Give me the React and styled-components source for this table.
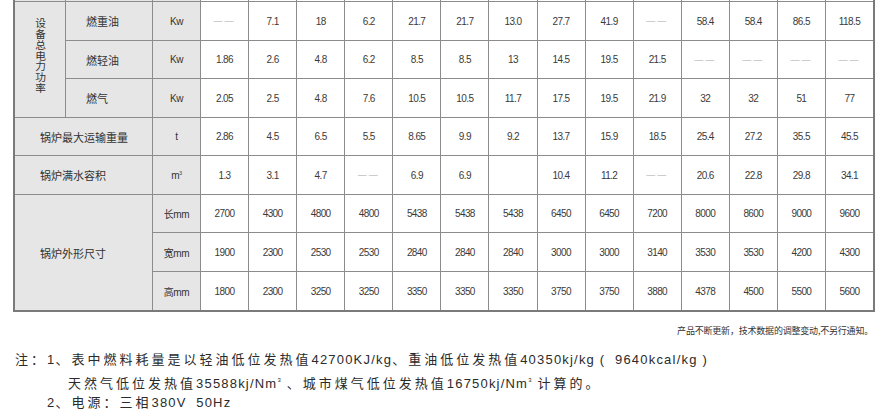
import React from "react";
import styled, { createGlobalStyle } from "styled-components";

const GlobalStyle = createGlobalStyle`
  html, body {
    margin: 0;
    padding: 0;
    background: #ffffff;
  }
  body {
    font-family: "Liberation Sans", "Noto Sans CJK SC", sans-serif;
    color: #333;
  }
`;

const LINE = "#8c8c8c";
const GREY = "#e6e6e6";

const Page = styled.div`
  width: 891px;
  height: 419px;
  overflow: hidden;
  display: flex;
  flex-direction: column;
`;

const Sheet = styled.div`
  margin: -37px 0 0 13px;
  width: 858px;
  display: grid;
  grid-template-columns: 50px 86px 47px repeat(14, 1fr);
  grid-template-rows: 36px 38px 37px 38px 37px 38px 37px 38px 38px;
  gap: 1px;
  background: ${LINE};
  border: 2px solid #7a7a7a;
`;

const Cell = styled.div`
  grid-column: span ${({ $cols }) => $cols || 1};
  grid-row: span ${({ $rows }) => $rows || 1};
  background: ${({ $head }) => ($head ? GREY : "#fff")};
  display: flex;
  align-items: center;
  justify-content: ${({ $left }) => ($left ? "flex-start" : "center")};
  padding-left: ${({ $left }) => $left || 0}px;
  font-family: "Liberation Sans", "Noto Sans CJK SC", sans-serif;
  font-size: 11px;
  color: #333;
  white-space: nowrap;
`;

const Num = styled.span`
  font-family: "Liberation Sans Narrow", "Liberation Sans", sans-serif;
  font-size: 10px;
  letter-spacing: -0.6px;
  color: #3a3a3a;
`;

const Dash = styled.span`
  font-size: 9px;
  letter-spacing: 2px;
  color: #aaa;
`;

const Vertical = styled.span`
  writing-mode: vertical-rl;
  text-orientation: upright;
  font-family: "Noto Sans CJK SC", sans-serif;
  font-size: 10.7px;
  line-height: 12px;
  margin-top: -8px;
`;

const Unit = styled.span`
  font-size: 10px;
  letter-spacing: -0.4px;
  sup {
    font-size: 5px;
    vertical-align: 4px;
  }
`;

const Disclaimer = styled.div`
  width: 873px;
  margin-top: 12px;
  text-align: right;
  font-family: "Noto Sans CJK SC", sans-serif;
  font-size: 9px;
  letter-spacing: -0.2px;
  color: #333;
`;

const Notes = styled.div`
  margin: 12px 0 0 15px;
  font-family: "Liberation Sans", "Noto Sans CJK SC", sans-serif;
  font-size: 13px;
  color: #2b2b2b;
  letter-spacing: 3px;
  display: flex;
  flex-direction: column;
  line-height: 21px;
`;

const NoteLine = styled.div`
  padding-left: ${({ $indent }) => $indent || 0}px;
  margin-top: ${({ $pull }) => ($pull ? -2 : 0)}px;
  white-space: pre;
`;

const Latin = styled.span`
  letter-spacing: 1.2px;
  sup {
    font-size: 6px;
    vertical-align: 6px;
  }
`;

const power = [
  ["燃重油", ["--", "7.1", "18", "6.2", "21.7", "21.7", "13.0", "27.7", "41.9", "--", "58.4", "58.4", "86.5", "118.5"]],
  ["燃轻油", ["1.86", "2.6", "4.8", "6.2", "8.5", "8.5", "13", "14.5", "19.5", "21.5", "--", "--", "--", "--"]],
  ["燃气", ["2.05", "2.5", "4.8", "7.6", "10.5", "10.5", "11.7", "17.5", "19.5", "21.9", "32", "32", "51", "77"]],
];

const weight = ["2.86", "4.5", "6.5", "5.5", "8.65", "9.9", "9.2", "13.7", "15.9", "18.5", "25.4", "27.2", "35.5", "45.5"];
const water = ["1.3", "3.1", "4.7", "--", "6.9", "6.9", "", "10.4", "11.2", "--", "20.6", "22.8", "29.8", "34.1"];

const sizes = [
  ["长mm", ["2700", "4300", "4800", "4800", "5438", "5438", "5438", "6450", "6450", "7200", "8000", "8600", "9000", "9600"]],
  ["宽mm", ["1900", "2300", "2530", "2530", "2840", "2840", "2840", "3000", "3000", "3140", "3530", "3530", "4200", "4300"]],
  ["高mm", ["1800", "2300", "3250", "3250", "3350", "3350", "3350", "3750", "3750", "3880", "4378", "4500", "5500", "5600"]],
];

function Values({ list, row }) {
  return list.map((v, i) => (
    <Cell key={`${row}-${i}`}>
      {v === "--" ? <Dash>——</Dash> : <Num>{v}</Num>}
    </Cell>
  ));
}

export default function App() {
  return (
    <Page>
      <GlobalStyle />
      <Sheet>
        {/* tail of the previous row, mostly above the fold */}
        <Cell $head />
        <Cell $head />
        <Cell $head />
        {Array.from({ length: 14 }).map((_, i) => (
          <Cell key={`top-${i}`} />
        ))}

        <Cell $head $rows={3}>
          <Vertical>设备总电力功率</Vertical>
        </Cell>
        {power.map(([fuel, vals]) => (
          <React.Fragment key={fuel}>
            <Cell $head $left={20}>{fuel}</Cell>
            <Cell $head><Unit>Kw</Unit></Cell>
            <Values list={vals} row={fuel} />
          </React.Fragment>
        ))}

        <Cell $head $cols={2} $left={25}>锅炉最大运输重量</Cell>
        <Cell $head><Unit>t</Unit></Cell>
        <Values list={weight} row="w" />

        <Cell $head $cols={2} $left={25}>锅炉满水容积</Cell>
        <Cell $head><Unit>m<sup>3</sup></Unit></Cell>
        <Values list={water} row="v" />

        <Cell $head $cols={2} $rows={3} $left={25}>锅炉外形尺寸</Cell>
        {sizes.map(([unit, vals]) => (
          <React.Fragment key={unit}>
            <Cell $head><Unit>{unit}</Unit></Cell>
            <Values list={vals} row={unit} />
          </React.Fragment>
        ))}
      </Sheet>

      <Disclaimer>产品不断更新，技术数据的调整变动,不另行通知。</Disclaimer>

      <Notes>
        <NoteLine>
          注：<Latin>1</Latin>、表中燃料耗量是以轻油低位发热值<Latin>42700KJ/kg</Latin>、重油低位发热值<Latin>40350kj/kg (  9640kcal/kg )</Latin>
        </NoteLine>
        <NoteLine $indent={53}>
          天然气低位发热值<Latin>35588kj/Nm<sup>3</sup> </Latin>、城市煤气低位发热值<Latin>16750kj/Nm<sup>3</sup> </Latin>计算的。
        </NoteLine>
        <NoteLine $indent={32} $pull>
          <Latin>2</Latin>、电源：三相<Latin>380V  50Hz</Latin>
        </NoteLine>
      </Notes>
    </Page>
  );
}
